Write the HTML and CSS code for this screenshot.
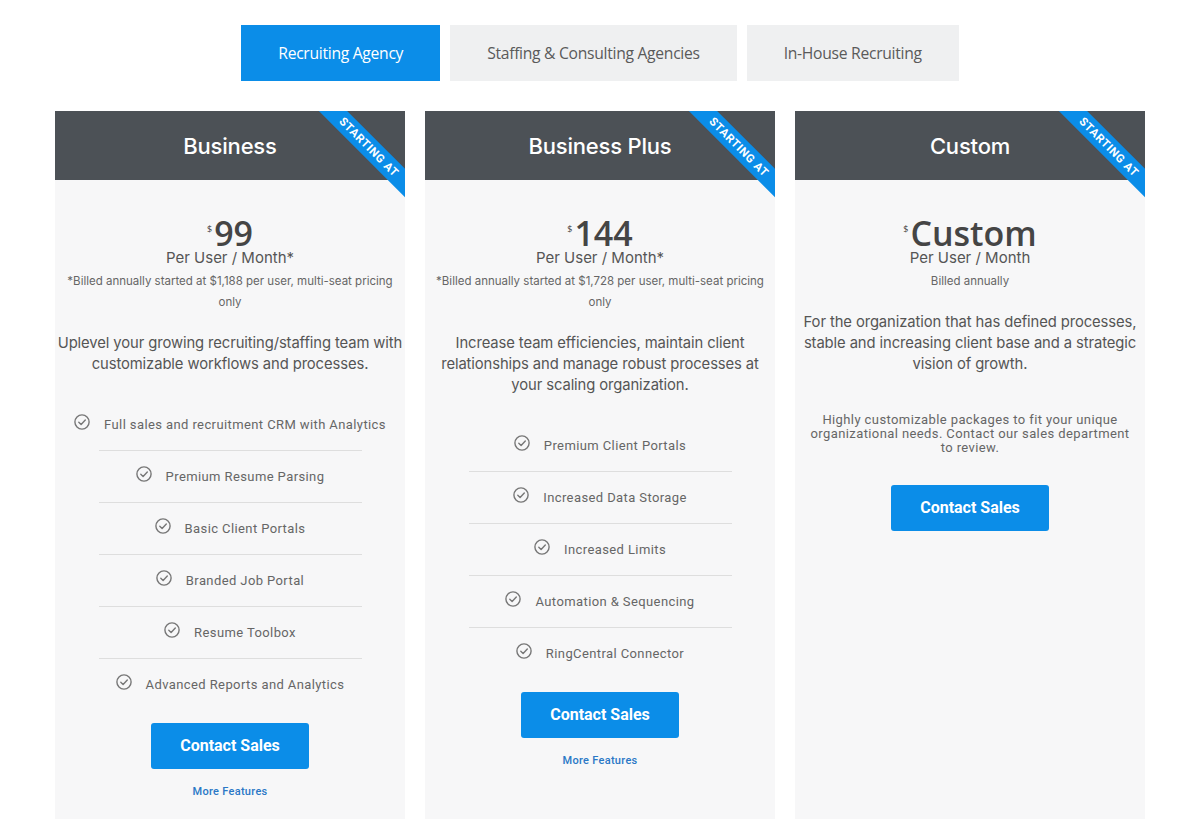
FILE: index.html
```html
<!DOCTYPE html>
<html lang="en">
<head>
  <meta charset="UTF-8">
  <meta name="viewport" content="width=device-width, initial-scale=1.0">
  <title>Pricing</title>
  <link rel="stylesheet" href="styles.css">
</head>
<body>
  <div class="tabs">
    <button class="tab active">Recruiting Agency</button>
    <button class="tab">Staffing &amp; Consulting Agencies</button>
    <button class="tab">In-House Recruiting</button>
  </div>

  <div class="plans">
    <div class="card">
      <div class="card-head">
        <h3>Business</h3>
        <div class="ribbon"><span>Starting at</span></div>
      </div>
      <div class="card-body">
        <div class="price"><sup>$</sup>99</div>
        <div class="per">Per User / Month*</div>
        <p class="billed">*Billed annually started at $1,188 per user, multi-seat pricing<br>only</p>
        <p class="desc">Uplevel your growing recruiting/staffing team with<br>customizable workflows and processes.</p>
        <ul class="features">
          <li><span class="check"></span>Full sales and recruitment CRM with Analytics</li>
          <li><span class="check"></span>Premium Resume Parsing</li>
          <li><span class="check"></span>Basic Client Portals</li>
          <li><span class="check"></span>Branded Job Portal</li>
          <li><span class="check"></span>Resume Toolbox</li>
          <li><span class="check"></span>Advanced Reports and Analytics</li>
        </ul>
        <a class="btn" href="#">Contact Sales</a>
        <a class="more" href="#">More Features</a>
      </div>
    </div>

    <div class="card">
      <div class="card-head">
        <h3>Business Plus</h3>
        <div class="ribbon"><span>Starting at</span></div>
      </div>
      <div class="card-body">
        <div class="price"><sup>$</sup>144</div>
        <div class="per">Per User / Month*</div>
        <p class="billed">*Billed annually started at $1,728 per user, multi-seat pricing<br>only</p>
        <p class="desc">Increase team efficiencies, maintain client<br>relationships and manage robust processes at<br>your scaling organization.</p>
        <ul class="features">
          <li><span class="check"></span>Premium Client Portals</li>
          <li><span class="check"></span>Increased Data Storage</li>
          <li><span class="check"></span>Increased Limits</li>
          <li><span class="check"></span>Automation &amp; Sequencing</li>
          <li><span class="check"></span>RingCentral Connector</li>
        </ul>
        <a class="btn" href="#">Contact Sales</a>
        <a class="more" href="#">More Features</a>
      </div>
    </div>

    <div class="card">
      <div class="card-head">
        <h3>Custom</h3>
        <div class="ribbon"><span>Starting at</span></div>
      </div>
      <div class="card-body">
        <div class="price"><sup>$</sup>Custom</div>
        <div class="per">Per User / Month</div>
        <p class="billed">Billed annually</p>
        <p class="desc">For the organization that has defined processes,<br>stable and increasing client base and a strategic<br>vision of growth.</p>
        <p class="note">Highly customizable packages to fit your unique<br>organizational needs. Contact our sales department<br>to review.</p>
        <a class="btn btn-note" href="#">Contact Sales</a>
      </div>
    </div>
  </div>

  <svg width="0" height="0" style="position:absolute">
    <defs>
      <symbol id="ico-check" viewBox="0 0 16 16">
        <circle cx="8" cy="8" r="7.1" fill="none" stroke="#777" stroke-width="1.4"/>
        <path d="M4.8 8.2 L7.1 10.4 L11.3 5.9" fill="none" stroke="#777" stroke-width="1.4" stroke-linecap="round" stroke-linejoin="round"/>
      </symbol>
    </defs>
  </svg>
  <script>
    document.querySelectorAll('.check').forEach(function (el) {
      el.innerHTML = '<svg width="16" height="16"><use href="#ico-check"/></svg>';
    });
  </script>
</body>
</html>
```

FILE: styles.css
```css
body {
  margin: 0;
  padding-top: 25px;
  background: #fff;
  font-family: Inter, 'Open Sans', sans-serif;
  color: #555;
}
.tabs {
  display: flex;
  justify-content: center;
  gap: 10px;
}
.tab {
  height: 56px;
  padding: 0 37px;
  border: none;
  background: #eff0f1;
  color: #5a5a5a;
  font-family: 'Open Sans', sans-serif;
  font-size: 15.7px;
  letter-spacing: -0.3px;
  cursor: pointer;
}
.tab.active {
  background: #0b8de8;
  color: #fff;
}
.plans {
  display: flex;
  justify-content: center;
  gap: 20px;
  margin-top: 30px;
}
.card {
  position: relative;
  width: 350px;
  background: #f7f7f8;
  overflow: hidden;
}
.card-head {
  height: 69px;
  background: #4c5156;
  display: flex;
  align-items: center;
  justify-content: center;
}
.card-head h3 {
  margin: 0;
  color: #fff;
  font-size: 22px;
  font-weight: 500;
  letter-spacing: -0.2px;
}
.ribbon {
  position: absolute;
  top: 0;
  right: 0;
  width: 100px;
  height: 100px;
  overflow: hidden;
}
.ribbon span {
  position: absolute;
  left: -11px;
  top: 26px;
  width: 150px;
  height: 20px;
  line-height: 20px;
  background: #0b8de8;
  color: #fff;
  text-align: center;
  text-transform: uppercase;
  font-family: Roboto, sans-serif;
  font-size: 11.5px;
  font-weight: 700;
  letter-spacing: 0.6px;
  transform: rotate(45deg);
}
.card-body {
  padding: 37px 0 20px;
  text-align: center;
}
.price {
  font-family: 'Open Sans', sans-serif;
  font-size: 34px;
  line-height: 32px;
  font-weight: 600;
  color: #454545;
}
.price sup {
  font-size: 9px;
  font-weight: 400;
  vertical-align: top;
  position: relative;
  top: -4px;
  margin-right: 2px;
}
.per {
  font-size: 15px;
  line-height: 18px;
  color: #555;
}
.billed {
  margin: 4px 0 0;
  font-size: 11.5px;
  line-height: 21px;
  color: #666;
}
.desc {
  margin: 20px 0 0;
  font-size: 14.8px;
  line-height: 21px;
  color: #555;
  letter-spacing: -0.1px;
  white-space: nowrap;
}
.features {
  list-style: none;
  margin: 24px auto 0;
  padding: 0;
  width: 263px;
}
.features li {
  display: flex;
  justify-content: center;
  align-items: center;
  gap: 14px;
  padding: 16px 0 15px;
  line-height: 20px;
  white-space: nowrap;
  border-bottom: 1px solid #dedede;
  font-family: Roboto, sans-serif;
  font-size: 13px;
  letter-spacing: 0.4px;
  color: #666;
}
.features li:last-child {
  border-bottom: none;
}
.check {
  display: flex;
  width: 16px;
  height: 16px;
  flex-shrink: 0;
  margin-top: -6px;
}
.btn {
  display: block;
  width: 158px;
  height: 46px;
  margin: 13px auto 0;
  line-height: 46px;
  background: #0b8de8;
  border-radius: 3px;
  color: #fff;
  text-decoration: none;
  font-family: Roboto, sans-serif;
  font-size: 16px;
  font-weight: 700;
}
.btn-note {
  margin-top: 30px;
}
.more {
  display: block;
  margin-top: 15px;
  line-height: 16px;
  color: #2a78c6;
  text-decoration: none;
  font-family: Roboto, sans-serif;
  font-size: 11px;
  font-weight: 500;
  letter-spacing: 0.3px;
}
.note {
  margin: 38px 0 0;
  font-family: Roboto, sans-serif;
  font-size: 13px;
  line-height: 14px;
  letter-spacing: 0.4px;
  color: #666;
}
```
